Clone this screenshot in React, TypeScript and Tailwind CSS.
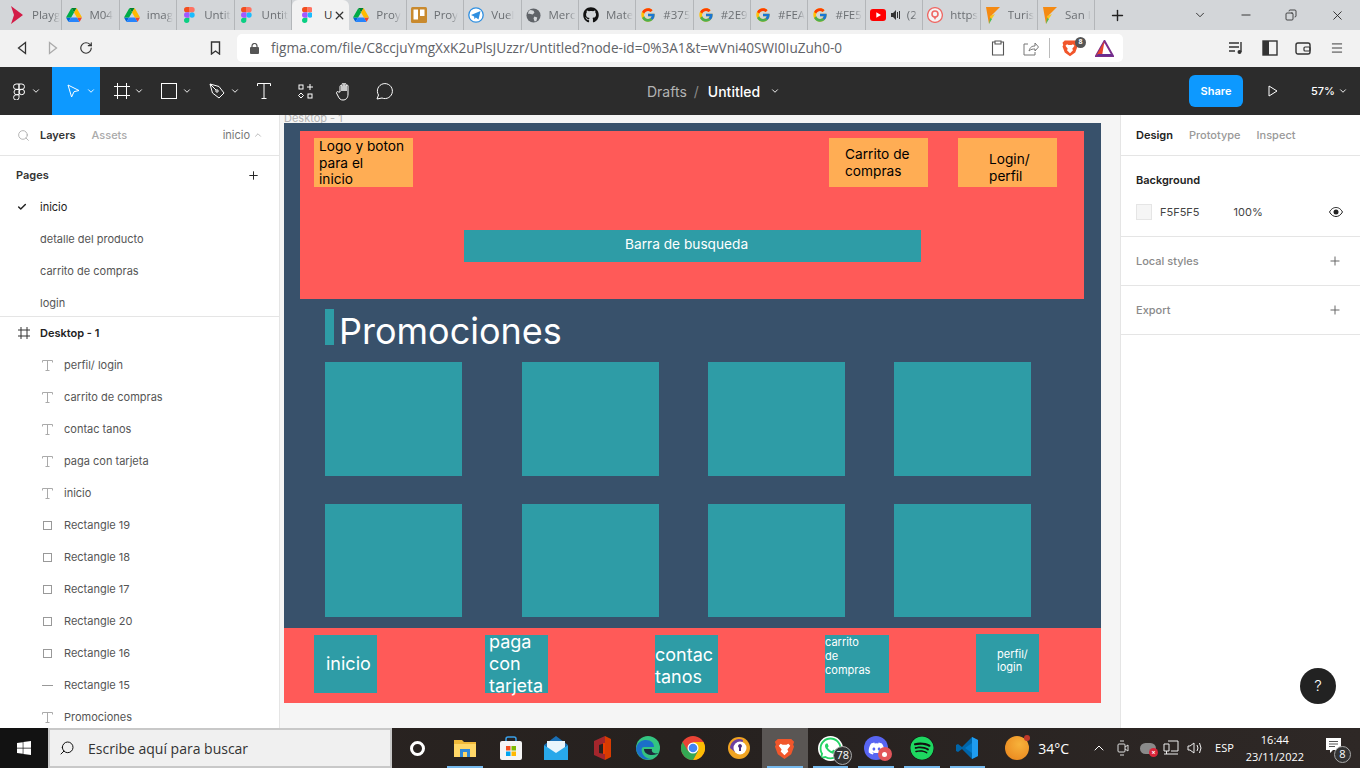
import type { ReactNode } from "react";
import { FaGithub, FaWindows, FaWhatsapp, FaDiscord, FaSpotify } from "react-icons/fa";
import { FcGoogle } from "react-icons/fc";
import {
  Check,
  ChevronDown,
  ChevronUp,
  Copy,
  Menu,
  Minus,
  Plus,
  RotateCw,
  Search,
  X,
} from "lucide-react";

const INTER = "font-['Inter',sans-serif]";

function FigmaLogo({ size = 16 }: { size?: number }) {
  return (
    <svg width={size * 0.67} height={size} viewBox="0 0 38 57">
      <path fill="#1abcfe" d="M19 28.5a9.5 9.5 0 1 1 19 0 9.5 9.5 0 0 1-19 0z" />
      <path fill="#0acf83" d="M0 47.5A9.5 9.5 0 0 1 9.5 38H19v9.5a9.5 9.5 0 1 1-19 0z" />
      <path fill="#ff7262" d="M19 0v19h9.5a9.5 9.5 0 1 0 0-19H19z" />
      <path fill="#f24e1e" d="M0 9.5A9.5 9.5 0 0 0 9.5 19H19V0H9.5A9.5 9.5 0 0 0 0 9.5z" />
      <path fill="#a259ff" d="M0 28.5A9.5 9.5 0 0 0 9.5 38H19V19H9.5A9.5 9.5 0 0 0 0 28.5z" />
    </svg>
  );
}

function DriveLogo() {
  return (
    <svg width="16" height="14" viewBox="0 0 87 78">
      <path fill="#0066da" d="M6.6 66.9l3.9 6.7c.8 1.4 2 2.5 3.3 3.3L27.5 53H0c0 1.6.4 3.1 1.2 4.5z" />
      <path fill="#00ac47" d="M43.6 25L29.9 1.2c-1.3.8-2.5 1.9-3.3 3.3L1.2 48.5A9 9 0 0 0 0 53h27.5z" />
      <path fill="#ea4335" d="M73.5 76.9c1.3-.8 2.5-1.9 3.3-3.3l1.6-2.7 7.6-13.2c.8-1.4 1.2-2.9 1.2-4.5H59.7l5.9 11.5z" />
      <path fill="#00832d" d="M43.6 25L57.4 1.2C56 .4 54.5 0 52.9 0H34.4c-1.6 0-3.1.4-4.5 1.2z" />
      <path fill="#2684fc" d="M59.8 53H27.5L13.8 76.9c1.4.8 2.9 1.2 4.5 1.2h50.6c1.6 0 3.1-.4 4.5-1.2z" />
      <path fill="#ffba00" d="M73.4 26.5L60.7 4.5c-.8-1.4-2-2.5-3.3-3.3L43.6 25l16.2 28h27.5c0-1.6-.4-3.1-1.2-4.5z" />
    </svg>
  );
}

function BraveLogo({ size = 18 }: { size?: number }) {
  return (
    <svg width={size} height={size} viewBox="0 0 24 24">
      <path fill="#f1562b" d="M5 2h14l3 3-1 3 1 2-3 8-7 5-7-5-3-8 1-2-1-3z" />
      <path fill="#fff" d="M8 7l2 1h4l2-1 2 2-3 4 1 2-4 4-4-4 1-2-3-4z" />
    </svg>
  );
}

function PlayLogo() {
  return (
    <svg width="12" height="18" viewBox="0 0 12 18">
      <path fill="#d31c47" d="M0 0l12 9-12 9 3-9z" />
    </svg>
  );
}

function TrelloLogo() {
  return (
    <svg width="16" height="16" viewBox="0 0 16 16">
      <rect width="16" height="16" rx="1.5" fill="#c98a2e" />
      <rect x="2.5" y="2.5" width="4.5" height="10" fill="#fff" />
      <rect x="9" y="2.5" width="4.5" height="6.5" fill="#fff" />
    </svg>
  );
}

function PlaneLogo() {
  return (
    <svg width="16" height="16" viewBox="0 0 16 16">
      <circle cx="8" cy="8" r="7.2" fill="#fff" stroke="#2f8fe0" strokeWidth="1.3" />
      <path fill="#2f8fe0" d="M3 8l9.5-4-2 8.5-2.7-2-1.3 1.7-.4-2.8z" />
    </svg>
  );
}

function GlobeLogo() {
  return (
    <svg width="15" height="15" viewBox="0 0 16 16">
      <circle cx="8" cy="8" r="7.5" fill="#5f6368" />
      <path fill="#d3d6d9" d="M5 2l3 1 1 2-2 2-3-1-2 0 1-3zM9 9l3 1-1 4-2 0-1-3z" />
    </svg>
  );
}

function YoutubeLogo() {
  return (
    <svg width="16" height="12" viewBox="0 0 16 12">
      <rect width="16" height="12" rx="3" fill="#f00" />
      <path fill="#fff" d="M6.3 3.2L11 6 6.3 8.8z" />
    </svg>
  );
}

function SpeakerMini() {
  return (
    <svg width="9" height="10" viewBox="0 0 9 10">
      <path fill="#333" d="M0 3h2l3-3v10L2 7H0zM6 2h1v6H6zM8 1h1v8H8z" />
    </svg>
  );
}

function PinLogo() {
  return (
    <svg width="16" height="16" viewBox="0 0 16 16">
      <circle cx="8" cy="8" r="7.4" fill="#f4f4f4" stroke="#ee6a66" strokeWidth="1.3" />
      <circle cx="8" cy="7" r="3" fill="none" stroke="#ee6a66" strokeWidth="1.6" />
      <path fill="#ee6a66" d="M6.5 10h3L8 13z" />
    </svg>
  );
}

function FlagLogo() {
  return (
    <svg width="14" height="17" viewBox="0 0 14 17">
      <path fill="#f58a12" d="M0 0h14L6 8 3 17z" />
      <path fill="#f9c61b" d="M4 9l5-2-4 6z" />
      <path fill="#4ebd55" d="M3 17l1-6 2 1z" />
    </svg>
  );
}

type TabInfo = { icon: ReactNode; label: string; active?: boolean; extra?: ReactNode };

const TABS: TabInfo[] = [
  { icon: <PlayLogo />, label: "Playg" },
  { icon: <DriveLogo />, label: "M04" },
  { icon: <DriveLogo />, label: "imag" },
  { icon: <FigmaLogo />, label: "Untit" },
  { icon: <FigmaLogo />, label: "Untit" },
  { icon: <FigmaLogo />, label: "U", active: true },
  { icon: <DriveLogo />, label: "Proy" },
  { icon: <TrelloLogo />, label: "Proy" },
  { icon: <PlaneLogo />, label: "Vuel" },
  { icon: <GlobeLogo />, label: "Merc" },
  { icon: <FaGithub size={16} color="#111" />, label: "Mate" },
  { icon: <FcGoogle size={16} />, label: "#375" },
  { icon: <FcGoogle size={16} />, label: "#2E9" },
  { icon: <FcGoogle size={16} />, label: "#FEA" },
  { icon: <FcGoogle size={16} />, label: "#FE5" },
  { icon: <YoutubeLogo />, label: "(2", extra: <SpeakerMini /> },
  { icon: <PinLogo />, label: "https" },
  { icon: <FlagLogo />, label: "Turis" },
  { icon: <FlagLogo />, label: "San I" },
];

function TabStrip() {
  return (
    <div className="flex h-[30px] shrink-0 items-stretch bg-[#d3d6d9] pl-[5px] font-['Open_Sans',sans-serif] text-[11.5px] text-[#6b6f73]">
      {TABS.map((t, i) =>
        t.active ? (
          <div
            key={i}
            className="flex w-[57.4px] shrink-0 items-center rounded-t-[6px] bg-[#f2f2f2] pl-[7px]"
          >
            <span className="flex w-[16px] shrink-0 justify-center">{t.icon}</span>
            <span className="ml-[9px] w-[6px] text-[#333]">{t.label}</span>
            <X size={13} strokeWidth={2.4} className="ml-[3px] text-[#333]" />
          </div>
        ) : (
          <div
            key={i}
            className="flex w-[57.4px] shrink-0 items-center border-r border-[#b3b6b9] pl-[4px]"
          >
            <span className="flex w-[16px] shrink-0 justify-center">{t.icon}</span>
            {t.extra ? <span className="ml-[5px] shrink-0">{t.extra}</span> : null}
            <span className="ml-[7px] whitespace-nowrap [mask-image:linear-gradient(to_right,black_70%,transparent)]">
              {t.label}
            </span>
          </div>
        ),
      )}
      <div className="ml-[14px] flex items-center">
        <Plus size={17} strokeWidth={2} className="text-[#222]" />
      </div>
      <div className="ml-auto flex items-center text-[#222]">
        <ChevronDown size={14} strokeWidth={1.5} className="mr-[32px]" />
        <Minus size={14} strokeWidth={1.5} className="mr-[32px]" />
        <Copy size={12} strokeWidth={1.6} className="mr-[33px] -scale-x-100" />
        <X size={15} strokeWidth={1.4} className="mr-[15px]" />
      </div>
    </div>
  );
}

function AddressBar() {
  return (
    <div className="flex h-[37px] shrink-0 items-center bg-[#f2f2f2] pb-px font-['Open_Sans',sans-serif]">
      <svg width="10" height="14" viewBox="0 0 10 14" className="ml-[17px]">
        <path d="M8.5 1.5L1.5 7l7 5.5z" fill="none" stroke="#333" strokeWidth="1.3" />
      </svg>
      <svg width="10" height="14" viewBox="0 0 10 14" className="ml-[21px]">
        <path d="M1.5 1.5L8.5 7l-7 5.5z" fill="none" stroke="#aaa" strokeWidth="1.3" />
      </svg>
      <RotateCw size={14} strokeWidth={2} className="ml-[21px] text-[#333]" />
      <svg width="11" height="14" viewBox="0 0 11 14" className="ml-[117px]">
        <path d="M1.5 1h8v12l-4-3-4 3z" fill="none" stroke="#333" strokeWidth="1.4" />
      </svg>
      <div className="ml-[16px] flex h-[28px] w-[886px] items-center rounded-[5px] bg-white">
        <svg width="9" height="11" viewBox="0 0 9 11" className="ml-[13px]">
          <rect y="4" width="9" height="7" rx="1" fill="#555" />
          <path d="M2 5V3a2.5 2.5 0 0 1 5 0v2" fill="none" stroke="#555" strokeWidth="1.2" />
        </svg>
        <span className="ml-[12px] text-[13.6px] text-[#5f6368]">
          figma.com/file/C8ccjuYmgXxK2uPlsJUzzr/Untitled?node-id=0%3A1&amp;t=wVni40SWI0IuZuh0-0
        </span>
        <svg width="14" height="16" viewBox="0 0 14 16" className="ml-auto">
          <path d="M4 2H1.5v13h11V2H10M4 1h6v3H4z" fill="none" stroke="#555" strokeWidth="1.1" />
        </svg>
        <svg width="16" height="15" viewBox="0 0 16 15" className="ml-[18px]">
          <path d="M5 3H1v11h11v-3M6 10c1-4 3-5 6-5V2l3.5 4L12 10V8c-2 0-4 0-6 2z" fill="none" stroke="#777" strokeWidth="1" />
        </svg>
        <div className="ml-[10px] h-[20px] w-px bg-[#bbb]" />
        <div className="relative ml-[11px]">
          <BraveLogo />
          <span className="absolute -right-[7px] -top-[2px] flex h-[11px] w-[11px] items-center justify-center rounded-full bg-[#555] text-[7px] font-bold text-white">
            8
          </span>
        </div>
        <svg width="19" height="17" viewBox="0 0 19 17" className="ml-[16px] mr-[9px]">
          <path d="M9.5 1L1 16h17z" fill="none" stroke="#7b2d8b" strokeWidth="2" />
          <path d="M9.5 1L1 16h6z" fill="#e8442b" />
          <path d="M1 16h17l-2-2H3z" fill="#662d91" />
        </svg>
      </div>
      <svg width="16" height="14" viewBox="0 0 16 14" className="ml-[106px]">
        <path d="M0 2h10M0 6h10M0 10h6" stroke="#333" strokeWidth="1.4" />
        <path d="M12 1v10" stroke="#333" strokeWidth="1.4" />
        <circle cx="10.5" cy="11" r="2" fill="#333" />
      </svg>
      <svg width="16" height="16" viewBox="0 0 16 16" className="ml-[17px]">
        <rect x="1" y="1" width="14" height="14" fill="none" stroke="#333" strokeWidth="1.4" />
        <rect x="1" y="1" width="6" height="14" fill="#333" />
      </svg>
      <svg width="16" height="14" viewBox="0 0 16 14" className="ml-[17px]">
        <rect x="1" y="2" width="14" height="11" rx="2" fill="none" stroke="#333" strokeWidth="1.4" />
        <rect x="9" y="6" width="6" height="4" rx="1" fill="none" stroke="#333" strokeWidth="1.2" />
      </svg>
      <Menu size={14} strokeWidth={1.6} className="ml-[19px] text-[#333]" />
    </div>
  );
}

function Caret({ className = "" }: { className?: string }) {
  return <ChevronDown size={10} strokeWidth={2.2} className={`text-white ${className}`} />;
}

function FigmaToolbar() {
  const stroke = { fill: "none", stroke: "#fff", strokeWidth: 1 };
  return (
    <div className={`relative flex h-[48px] shrink-0 items-center bg-[#2c2c2c] text-white ${INTER}`}>
      <div className="flex w-[52px] items-center pl-[13px]">
        <svg width="12" height="17" viewBox="0 0 12 17" {...stroke}>
          <path d="M6 1H3.2a2.7 2.7 0 0 0 0 5.4H6zM6 1h2.8a2.7 2.7 0 0 1 0 5.4H6zM6 6.4H3.2a2.7 2.7 0 0 0 0 5.3H6zM6 11.7H3.2A2.7 2.7 0 1 0 6 14.4z" />
          <circle cx="8.8" cy="9" r="2.7" />
        </svg>
        <Caret className="ml-[6px]" />
      </div>
      <div className="flex h-[48px] w-[48px] items-center bg-[#0d99ff] pl-[15px]">
        <svg width="13" height="14" viewBox="0 0 13 14" {...stroke}>
          <path d="M1 1l11 5.5-5 1.2L4.600 13z" />
        </svg>
        <Caret className="ml-[6px]" />
      </div>
      <div className="ml-[14px] flex items-center">
        <svg width="16" height="16" viewBox="0 0 16 16" {...stroke}>
          <path d="M3.500 0v16M12.500 0v16M0 3.500h16M0 12.500h16" />
        </svg>
        <Caret className="ml-[4px]" />
      </div>
      <div className="ml-[17px] flex items-center">
        <svg width="16" height="16" viewBox="0 0 16 16" {...stroke}>
          <rect x="0.5" y="0.5" width="15" height="15" />
        </svg>
        <Caret className="ml-[5px]" />
      </div>
      <div className="ml-[17px] flex items-center">
        <svg width="16" height="16" viewBox="0 0 16 16" {...stroke}>
          <path d="M1 1l9 2.500 5 6.500-5 5-6.500-5zM1 1l6 6" />
          <circle cx="8" cy="8" r="1.2" />
        </svg>
        <Caret className="ml-[5px]" />
      </div>
      <svg width="14" height="16" viewBox="0 0 14 16" className="ml-[17px]" {...stroke}>
        <path d="M.5 3V.5h13V3M7 .5v15M4.500 15.500h5" />
      </svg>
      <svg width="15" height="15" viewBox="0 0 15 15" className="ml-[27px]" {...stroke}>
        <rect x="1" y="1" width="4" height="4" />
        <rect x="10" y="10" width="4" height="4" />
        <path d="M12 0v6M9 3h6M3 9l2.500 2.500L3 14 .5 11.500z" />
      </svg>
      <svg width="18" height="19" viewBox="0 0 18 19" className="ml-[23px]" {...stroke}>
        <path d="M4 10V4.500a1 1 0 0 1 2 0V9V2.500a1 1 0 0 1 2 0V9V2.500a1 1 0 0 1 2 0V9V4a1 1 0 0 1 2 0v8c0 4-2 6-5 6-2.500 0-3.500-1-5-4l-1.500-3c-.5-1 1-2 2-1z" />
      </svg>
      <svg width="18" height="17" viewBox="0 0 18 17" className="ml-[22px]" {...stroke}>
        <path d="M1 16l1.500-4A7.500 7.500 0 1 1 6 15z" />
      </svg>

      <div className="absolute left-[647px] top-0 flex h-[48px] items-center text-[14px]">
        <span className="text-[#b3b3b3]">Drafts</span>
        <span className="ml-[7px] text-[#8a8a8a]">/</span>
        <span className="ml-[9px] font-medium">Untitled</span>
        <Caret className="ml-[10px]" />
      </div>

      <div className="ml-auto flex items-center">
        <div className="flex h-[32px] w-[54px] items-center justify-center rounded-[6px] bg-[#0d99ff] text-[11px] font-semibold">
          Share
        </div>
        <svg width="10" height="12" viewBox="0 0 10 12" className="ml-[25px]" {...stroke}>
          <path d="M1 1l8 5-8 5z" />
        </svg>
        <span className="ml-[33px] text-[11px] font-medium">57%</span>
        <Caret className="ml-[3px] mr-[12px]" />
      </div>
    </div>
  );
}

const PAGES = ["inicio", "detalle del producto", "carrito de compras", "login"];

type Layer = { kind: "text" | "rect" | "line"; name: string };

const LAYERS: Layer[] = [
  { kind: "text", name: "perfil/ login" },
  { kind: "text", name: "carrito de compras" },
  { kind: "text", name: "contac tanos" },
  { kind: "text", name: "paga con tarjeta" },
  { kind: "text", name: "inicio" },
  { kind: "rect", name: "Rectangle 19" },
  { kind: "rect", name: "Rectangle 18" },
  { kind: "rect", name: "Rectangle 17" },
  { kind: "rect", name: "Rectangle 20" },
  { kind: "rect", name: "Rectangle 16" },
  { kind: "line", name: "Rectangle 15" },
  { kind: "text", name: "Promociones" },
];

function LayerIcon({ kind }: { kind: Layer["kind"] }) {
  if (kind === "text") {
    return (
      <svg width="11" height="11" viewBox="0 0 11 11" fill="none" stroke="#aaa" strokeWidth="1">
        <path d="M.5 2.500V.5h10v2M5.500.5v10M3.500 10.500h4" />
      </svg>
    );
  }
  if (kind === "rect") {
    return (
      <svg width="9" height="9" viewBox="0 0 9 9" fill="none" stroke="#999" strokeWidth="1" className="mx-px">
        <rect x="0.5" y="0.5" width="8" height="8" />
      </svg>
    );
  }
  return (
    <svg width="11" height="11" viewBox="0 0 11 11" stroke="#999" strokeWidth="1">
      <path d="M0 5.500h11" />
    </svg>
  );
}

function LeftPanel() {
  return (
    <aside className={`flex w-[280px] shrink-0 flex-col overflow-hidden border-r border-[#e5e5e5] bg-white text-[11px] text-[#333] ${INTER}`}>
      <div className="flex h-[41px] shrink-0 items-center border-b border-[#e5e5e5] pl-[17px] pr-[16px]">
        <Search size={13} strokeWidth={1.6} className="text-[#aaa]" />
        <span className="ml-[10px] font-semibold">Layers</span>
        <span className="ml-[16px] font-medium text-[#aaa]">Assets</span>
        <span className="ml-auto text-[#777]">inicio</span>
        <ChevronUp size={10} strokeWidth={1.6} className="ml-[3px] text-[#999]" />
      </div>
      <div className="flex h-[35px] shrink-0 items-center pl-[16px] pr-[19px] pt-[3px]">
        <span className="font-semibold">Pages</span>
        <Plus size={13} strokeWidth={1.8} className="ml-auto text-[#222]" />
      </div>
      <div className="flex h-[126px] shrink-0 flex-col border-b border-[#e5e5e5]">
        {PAGES.map((p, i) => (
          <div key={p} className="flex h-[32px] shrink-0 items-center pl-[17px]">
            <span className="w-[23px]">{i === 0 ? <Check size={10} strokeWidth={3.5} className="text-[#222]" /> : null}</span>
            <span className={i === 0 ? "text-[#222]" : "text-[#555]"}>{p}</span>
          </div>
        ))}
      </div>
      <div className="flex h-[32px] shrink-0 items-center pl-[18px]">
        <svg width="12" height="12" viewBox="0 0 12 12" fill="none" stroke="#333" strokeWidth="1">
          <path d="M3 0v12M9 0v12M0 3h12M0 9h12" />
        </svg>
        <span className="ml-[10px] font-semibold text-[#222]">Desktop - 1</span>
      </div>
      {LAYERS.map((l, i) => (
        <div key={i} className="flex h-[32px] shrink-0 items-center pl-[42px]">
          <span className="flex w-[22px]">
            <LayerIcon kind={l.kind} />
          </span>
          <span className="text-[#555]">{l.name}</span>
        </div>
      ))}
    </aside>
  );
}

function TealBox() {
  return <div className="h-[113.5px] w-[136.5px] bg-[#2e9ca6]" />;
}

function Canvas() {
  return (
    <main className={`relative min-w-0 flex-1 overflow-hidden bg-[#f5f5f5] ${INTER}`}>
      <span className="absolute left-[4px] -top-[5px] text-[11px] text-[#b3b3b3]">Desktop - 1</span>

      {/* the design frame: everything in here is placed freely on the figma canvas */}
      <div className="absolute left-[4px] top-[8px] h-[580px] w-[817px] bg-[#38516b]">
        <div className="absolute left-[16px] top-[8px] h-[168px] w-[784px] bg-[#ff5a58]">
          <div className="absolute left-[14px] top-[7px] h-[49px] w-[99px] bg-[#ffad54] pl-[5px] text-[13.7px] leading-[16.5px] text-black">
            Logo y boton
            <br />
            para el
            <br />
            inicio
          </div>
          <div className="absolute left-[529px] top-[7px] flex h-[49px] w-[99px] items-center bg-[#ffad54] pl-[16px] text-[13.7px] leading-[16.5px] text-black">
            <span>
              Carrito de
              <br />
              compras
            </span>
          </div>
          <div className="absolute left-[658px] top-[7px] h-[49px] w-[99px] bg-[#ffad54] pl-[31px] pt-[13px] text-[13.7px] leading-[16.5px] text-black">
            Login/
            <br />
            perfil
          </div>
          <div className="absolute left-[164px] top-[99px] flex h-[32px] w-[457px] items-center bg-[#2e9ca6] pb-[4px] pl-[161px] text-[13.7px] text-white">
            Barra de busqueda
          </div>
        </div>

        <div className="absolute left-[41px] top-[186px] h-[36px] w-[9px] bg-[#2e9ca6]" />
        <span className="absolute left-[55px] top-[186px] text-[36px] leading-[44px] text-white">Promociones</span>

        <div className="absolute left-[41px] top-[239px] grid grid-cols-[197px_186px_186px_137px] gap-y-[28px]">
          {Array.from({ length: 8 }).map((_, i) => (
            <TealBox key={i} />
          ))}
        </div>

        <div className="absolute left-0 top-[505px] h-[75px] w-[817px] bg-[#ff5a58] text-white">
          <div className="absolute left-[30px] top-[7px] flex h-[58px] w-[63px] items-center bg-[#2e9ca6] pb-[2px] pl-[12px] text-[18px]">
            inicio
          </div>
          <div className="absolute left-[201px] top-[7px] h-[58px] w-[63px] bg-[#2e9ca6] pl-[4px] text-[18px] leading-[22px] [&>span]:block">
            <span className="-mt-[4px]">paga</span>
            <span>con</span>
            <span>tarjeta</span>
          </div>
          <div className="absolute left-[371px] top-[7px] flex h-[58px] w-[63px] items-center bg-[#2e9ca6] pt-[4px] text-[18px] leading-[22px]">
            <span>
              contac
              <br />
              tanos
            </span>
          </div>
          <div className="absolute left-[541px] top-[7px] h-[58px] w-[64px] bg-[#2e9ca6] text-[11px] leading-[14px]">
            carrito
            <br />
            de
            <br />
            compras
          </div>
          <div className="absolute left-[692px] top-[6px] h-[58px] w-[63px] bg-[#2e9ca6] pl-[21px] pt-[14px] text-[11px] leading-[13px]">
            perfil/
            <br />
            login
          </div>
        </div>
      </div>
    </main>
  );
}

function RightPanel() {
  return (
    <aside className={`relative w-[240px] shrink-0 border-l border-[#e5e5e5] bg-white text-[11px] ${INTER}`}>
      <div className="flex h-[41px] items-center gap-[16px] border-b border-[#e5e5e5] pl-[15px]">
        <span className="font-semibold text-[#222]">Design</span>
        <span className="font-medium text-[#999]">Prototype</span>
        <span className="font-medium text-[#999]">Inspect</span>
      </div>
      <div className="h-[81px] border-b border-[#e5e5e5] pl-[15px] pr-[16px]">
        <div className="flex h-[48px] items-center font-semibold text-[#222]">Background</div>
        <div className="flex h-[16px] items-center">
          <span className="h-[16px] w-[16px] border border-[#e5e5e5] bg-[#f5f5f5]" />
          <span className="ml-[8px] text-[#444]">F5F5F5</span>
          <span className="ml-[34px] text-[#444]">100%</span>
          <svg width="14" height="10" viewBox="0 0 14 10" className="ml-auto mr-[1px]">
            <path d="M.5 5C2.500 1.500 4.800.5 7 .5s4.500 1 6.500 4.500C11.500 8.500 9.200 9.500 7 9.500S2.500 8.500.5 5z" fill="none" stroke="#222" strokeWidth="1" />
            <circle cx="7" cy="5" r="2.500" fill="#222" />
          </svg>
        </div>
      </div>
      <div className="flex h-[49px] items-center border-b border-[#e5e5e5] pl-[15px] pr-[18px]">
        <span className="font-medium text-[#8a8a8a]">Local styles</span>
        <Plus size={14} strokeWidth={1.7} className="ml-auto text-[#666]" />
      </div>
      <div className="flex h-[49px] items-center border-b border-[#e5e5e5] pl-[15px] pr-[18px]">
        <span className="font-medium text-[#8a8a8a]">Export</span>
        <Plus size={14} strokeWidth={1.7} className="ml-auto text-[#666]" />
      </div>
      <div className="absolute left-[179px] top-[553px] flex h-[36px] w-[36px] items-center justify-center rounded-full bg-[#222] text-[15px] font-light text-white">
        ?
      </div>
    </aside>
  );
}

function TaskIcon({ children, open, active }: { children: ReactNode; open?: boolean; active?: boolean }) {
  return (
    <div className={`relative flex h-[40px] w-[45.7px] shrink-0 items-center justify-center ${active ? "bg-[#5a5654]" : ""}`}>
      {children}
      {open ? <span className="absolute bottom-0 left-[5px] right-[5px] h-[2px] bg-[#76b9ed]" /> : null}
    </div>
  );
}

function Counter({ n }: { n: string }) {
  return (
    <span className="absolute bottom-[3px] right-[1px] flex h-[19px] w-[19px] items-center justify-center rounded-full border border-[#aaa] bg-[#333] text-[11px] text-white">
      {n}
    </span>
  );
}

function Taskbar() {
  return (
    <footer className="flex h-[40px] shrink-0 items-center bg-[linear-gradient(to_right,#2c2522,#26211f_50%,#2e2826)] font-['Open_Sans',sans-serif] text-white">
      <div className="flex h-[40px] w-[48px] items-center justify-center bg-[#121212]">
        <FaWindows size={16} />
      </div>
      <div className="flex h-[40px] w-[344px] items-center border-2 border-[#c8c8c8] bg-[#f0f0f0] pl-[9px] text-[14px] text-[#333]">
        <Search size={16} strokeWidth={1.5} className="-scale-x-100 text-[#111]" />
        <span className="ml-[13px]">Escribe aquí para buscar</span>
      </div>
      <div className="flex w-[50px] items-center justify-center">
        <span className="h-[15px] w-[15px] rounded-full border-[3px] border-white" />
      </div>
      <TaskIcon open>
        <svg width="22" height="20" viewBox="0 0 22 20">
          <path fill="#f0b93a" d="M0 2h8l2 2h12v15H0z" />
          <path fill="#ffd767" d="M0 6h22v13H0z" />
          <path fill="#2f88d8" d="M6 11h10v8h-3v-5H9v5H6z" />
        </svg>
      </TaskIcon>
      <TaskIcon>
        <svg width="22" height="24" viewBox="0 0 22 24">
          <path d="M6 6V3a2 2 0 0 1 2-2h6a2 2 0 0 1 2 2v3" fill="none" stroke="#3aa0e8" strokeWidth="1.5" />
          <rect y="5" width="22" height="19" rx="2" fill="#f5f5f5" />
          <rect x="6" y="10" width="4.500" height="4.500" fill="#f25022" />
          <rect x="11.500" y="10" width="4.500" height="4.500" fill="#7fba00" />
          <rect x="6" y="15.500" width="4.500" height="4.500" fill="#00a4ef" />
          <rect x="11.500" y="15.500" width="4.500" height="4.500" fill="#ffb900" />
        </svg>
      </TaskIcon>
      <TaskIcon>
        <svg width="24" height="24" viewBox="0 0 24 24">
          <path fill="#1a6fb5" d="M0 9L12 0l12 9-12 8z" />
          <path fill="#e9f5fc" d="M3 5h18v10l-9 5-9-5z" />
          <path fill="#28a8ea" d="M0 9l12 8 12-8v15H0z" />
        </svg>
      </TaskIcon>
      <TaskIcon>
        <svg width="18" height="24" viewBox="0 0 18 24">
          <path fill="#d83b01" d="M12 0l6 3v18l-6 3z" />
          <path fill="#a4262c" d="M1 5l11-5v7L6 9v8l6 1v6L1 19z" />
          <path fill="#eb3c00" d="M12 7v11h-2V7z" />
        </svg>
      </TaskIcon>
      <TaskIcon>
        <svg width="24" height="24" viewBox="0 0 24 24">
          <circle cx="12" cy="12" r="12" fill="#33c481" />
          <path fill="#1b6fc8" d="M0 13C1 6 6 4 10 4c5 0 8 3 8 7H8c-2 0-3 2-2 5 1 4 5 7 9 7A12 12 0 0 1 0 13z" />
          <path fill="#1e2a3a" d="M8 13c0 4 4 6 8 6 3 0 6-1 8-3-1 1-4 2-6 1-3-1-2-4-2-4z" />
        </svg>
      </TaskIcon>
      <TaskIcon>
        <svg width="24" height="24" viewBox="0 0 24 24">
          <circle cx="12" cy="12" r="12" fill="#ea4335" />
          <path fill="#fbbc04" d="M12 24A12 12 0 0 0 22.400 6H12l5 9z" />
          <path fill="#34a853" d="M1.600 6A12 12 0 0 0 12 24l5-9H7z" />
          <circle cx="12" cy="12" r="5.500" fill="#fff" />
          <circle cx="12" cy="12" r="4.300" fill="#4285f4" />
        </svg>
      </TaskIcon>
      <TaskIcon>
        <svg width="24" height="24" viewBox="0 0 24 24">
          <circle cx="12" cy="12" r="11" fill="#f0a422" />
          <path fill="#6b3fa0" d="M3 12a9 9 0 0 1 13-8l-1 5-3 1-4 6z" />
          <circle cx="13" cy="12" r="6.500" fill="#fff" />
          <path fill="#4a2d80" d="M13 8a2 2 0 0 1 1 3.700V15h-2v-3.300A2 2 0 0 1 13 8z" />
        </svg>
      </TaskIcon>
      <TaskIcon active open>
        <BraveLogo size={23} />
      </TaskIcon>
      <TaskIcon open>
        <FaWhatsapp size={25} color="#25d366" className="rounded-full bg-white" />
        <Counter n="78" />
      </TaskIcon>
      <TaskIcon open>
        <span className="flex h-[24px] w-[24px] items-center justify-center rounded-full bg-[#5865f2]">
          <FaDiscord size={17} color="#fff" />
        </span>
        <span className="absolute bottom-[7px] right-[7px] flex h-[14px] w-[14px] items-center justify-center rounded-full bg-[#e2555a]">
          <span className="h-[5px] w-[5px] rounded-full bg-white" />
        </span>
      </TaskIcon>
      <TaskIcon open>
        <FaSpotify size={24} color="#1ed760" className="rounded-full bg-[#111]" />
      </TaskIcon>
      <TaskIcon open>
        <svg width="24" height="24" viewBox="0 0 24 24">
          <path fill="#0065a9" d="M17 1L7 11 3 8 1 9v6l2 1 4-3 10 10 6-3V4z" />
          <path fill="#007acc" d="M17 7l-7 5 7 5z" />
          <path fill="#1f9cf0" d="M17 1l6 3v16l-6 3z" />
        </svg>
      </TaskIcon>

      <span className="relative ml-[15px] h-[24px] w-[24px] shrink-0 rounded-full bg-[radial-gradient(circle_at_60%_35%,#f7b23b,#e8811a)]">
        <span className="absolute -right-[1px] -top-[1px] h-[6px] w-[6px] rounded-full bg-[#c0392b]" />
      </span>
      <span className="ml-[9px] text-[14px]">34°C</span>
      <ChevronUp size={16} strokeWidth={1.5} className="ml-[22px]" />
      <svg width="12" height="16" viewBox="0 0 12 16" className="ml-[10px]" fill="none" stroke="#ddd" strokeWidth="1">
        <rect x="1" y="4" width="7" height="8" rx="1" />
        <path d="M8 7l3-2v6l-3-2M3 1h4M3 15h4" />
      </svg>
      <span className="relative ml-[11px] h-[11px] w-[16px] shrink-0 rounded-full bg-[#8a8a8a]">
        <span className="absolute -bottom-[3px] -right-[2px] flex h-[9px] w-[9px] items-center justify-center rounded-full bg-[#d9263a] text-[7px] font-bold leading-none">
          ×
        </span>
      </span>
      <svg width="16" height="16" viewBox="0 0 16 16" className="ml-[7px]" fill="none" stroke="#eee" strokeWidth="1">
        <path d="M5 1h10v10H8M1 4h5v7H1zM3.500 11v3M1 14h14" />
      </svg>
      <svg width="17" height="14" viewBox="0 0 17 14" className="ml-[8px]" fill="none" stroke="#eee" strokeWidth="1">
        <path d="M1 5h2l4-3v10L3 9H1zM10 4q2 3 0 6M12.500 2q3 5 0 10" />
      </svg>
      <span className="ml-[11px] text-[11px]">ESP</span>
      <div className="ml-[11px] flex w-[60px] flex-col items-center text-[11px] leading-[17px]">
        <span>16:44</span>
        <span className="whitespace-nowrap">23/11/2022</span>
      </div>
      <div className="relative ml-[18px] h-[40px] w-[30px]">
        <svg width="15" height="15" viewBox="0 0 15 15" className="absolute left-[3px] top-[10px]">
          <path fill="#fff" d="M0 0h15v12H7l-3 3v-3H0z" />
          <path stroke="#555" d="M3 3.500h9M3 6h9M3 8.500h6" />
        </svg>
        <span className="absolute left-[11px] top-[18px] flex h-[17px] w-[17px] items-center justify-center rounded-full border border-[#aaa] bg-[#333] text-[11px]">
          8
        </span>
      </div>
    </footer>
  );
}

export default function App() {
  return (
    <div className="flex h-[768px] w-[1360px] flex-col overflow-hidden bg-white">
      <TabStrip />
      <AddressBar />
      <FigmaToolbar />
      <div className="flex min-h-0 flex-1">
        <LeftPanel />
        <Canvas />
        <RightPanel />
      </div>
      <Taskbar />
    </div>
  );
}
